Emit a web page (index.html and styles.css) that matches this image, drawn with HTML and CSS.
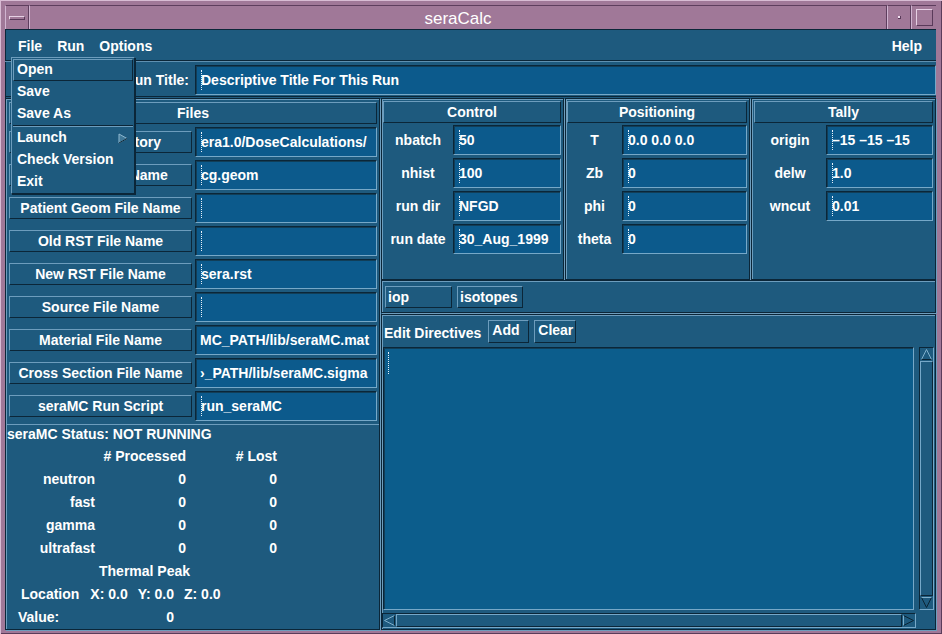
FILE: index.html
```html
<!DOCTYPE html>
<html>
<head>
<meta charset="utf-8">
<title>seraCalc</title>
<link rel="stylesheet" href="styles.css">
</head>
<body>
<div class="win">
  <div class="titlebar">
    <div class="tb-btn tb-menu"><span class="tb-bar"></span></div>
    <div class="tb-title">seraCalc</div>
    <div class="tb-btn tb-min"><span class="tb-dot"></span></div>
    <div class="tb-btn tb-max"><span class="tb-sq"></span></div>
  </div>
  <div class="client">
    <div class="menubar">
      <span class="mi mi-active">File</span><span class="mi">Run</span><span class="mi">Options</span><span class="mb-spacer"></span><span class="mi">Help</span>
    </div>
    <div class="runtitle">
      <div class="rt-label">Run Title:</div>
      <div class="field"><i class="caret"></i>Descriptive Title For This Run</div>
    </div>
    <div class="main">
      <div class="leftcol">
        <div class="files">
          <div class="phead">Files</div>
          <div class="frow"><div class="btn">Working Directory</div><div class="field"><i class="caret"></i>era1.0/DoseCalculations/</div></div>
          <div class="frow"><div class="btn">CG Geom File Name</div><div class="field"><i class="caret"></i>cg.geom</div></div>
          <div class="frow"><div class="btn">Patient Geom File Name</div><div class="field"><i class="caret"></i></div></div>
          <div class="frow"><div class="btn">Old RST File Name</div><div class="field"><i class="caret"></i></div></div>
          <div class="frow"><div class="btn">New RST File Name</div><div class="field"><i class="caret"></i>sera.rst</div></div>
          <div class="frow"><div class="btn">Source File Name</div><div class="field"><i class="caret"></i></div></div>
          <div class="frow"><div class="btn">Material File Name</div><div class="field">MC_PATH/lib/seraMC.mat</div></div>
          <div class="frow"><div class="btn">Cross Section File Name</div><div class="field">&#8250;_PATH/lib/seraMC.sigma</div></div>
          <div class="frow"><div class="btn">seraMC Run Script</div><div class="field"><i class="caret"></i>run_seraMC</div></div>
        </div>
        <div class="status">
          <div class="st-title">seraMC Status: NOT RUNNING</div>
          <div class="st-grid">
            <span></span><span class="c2 hd"># Processed</span><span class="c3 hd"># Lost</span>
            <span class="c1">neutron</span><span class="c2">0</span><span class="c3">0</span>
            <span class="c1">fast</span><span class="c2">0</span><span class="c3">0</span>
            <span class="c1">gamma</span><span class="c2">0</span><span class="c3">0</span>
            <span class="c1">ultrafast</span><span class="c2">0</span><span class="c3">0</span>
          </div>
          <div class="st-peak">Thermal Peak</div>
          <div class="st-loc"><span class="loc-l">Location</span><span class="loc-v">X: 0.0</span><span class="loc-v">Y: 0.0</span><span class="loc-v">Z: 0.0</span></div>
          <div class="st-val"><span class="val-l">Value:</span><span class="val-v">0</span></div>
        </div>
      </div>
      <div class="rightcol">
        <div class="panels">
          <div class="panel p-control">
            <div class="phead">Control</div>
            <div class="prow"><div class="plabel">nbatch</div><div class="field"><i class="caret"></i>50</div></div>
            <div class="prow"><div class="plabel">nhist</div><div class="field"><i class="caret"></i>100</div></div>
            <div class="prow"><div class="plabel">run dir</div><div class="field"><i class="caret"></i>NFGD</div></div>
            <div class="prow"><div class="plabel">run date</div><div class="field"><i class="caret"></i>30_Aug_1999</div></div>
          </div>
          <div class="panel p-pos">
            <div class="phead">Positioning</div>
            <div class="prow"><div class="plabel">T</div><div class="field"><i class="caret"></i>0.0 0.0 0.0</div></div>
            <div class="prow"><div class="plabel">Zb</div><div class="field"><i class="caret"></i>0</div></div>
            <div class="prow"><div class="plabel">phi</div><div class="field"><i class="caret"></i>0</div></div>
            <div class="prow"><div class="plabel">theta</div><div class="field"><i class="caret"></i>0</div></div>
          </div>
          <div class="panel p-tally">
            <div class="phead">Tally</div>
            <div class="prow"><div class="plabel">origin</div><div class="field"><i class="caret"></i>&#8211;15 &#8211;15 &#8211;15</div></div>
            <div class="prow"><div class="plabel">delw</div><div class="field"><i class="caret"></i>1.0</div></div>
            <div class="prow"><div class="plabel">wncut</div><div class="field"><i class="caret"></i>0.01</div></div>
          </div>
        </div>
        <div class="ioprow">
          <div class="tbtn iop">iop</div>
          <div class="tbtn isotopes">isotopes</div>
        </div>
        <div class="editpanel">
          <div class="edhead">
            <span class="edlabel">Edit Directives</span>
            <span class="pbtn add">Add</span>
            <span class="pbtn clear">Clear</span>
          </div>
          <div class="edbody">
            <div class="edtext"><i class="caret"></i></div>
            <div class="vscroll">
              <div class="arrow"><svg width="13" height="13" viewBox="0 0 13 13"><polygon points="6.5,1.5 1.5,11.5 11.5,11.5" fill="none" stroke="#7fb0cc" stroke-width="1"/><line x1="1.5" y1="11.5" x2="11.5" y2="11.5" stroke="#0a2434"/></svg></div>
              <div class="vslider"></div>
              <div class="arrow"><svg width="13" height="13" viewBox="0 0 13 13"><polygon points="1.5,1.5 11.5,1.5 6.5,11.5" fill="none" stroke="#0a2434" stroke-width="1"/><line x1="1.5" y1="1.5" x2="11.5" y2="1.5" stroke="#7fb0cc"/></svg></div>
            </div>
          </div>
          <div class="hscrollrow">
            <div class="hscroll">
              <div class="harrow"><svg width="13" height="13" viewBox="0 0 13 13"><polygon points="1.5,6.5 11.5,1.5 11.5,11.5" fill="none" stroke="#7fb0cc" stroke-width="1"/><line x1="11.5" y1="1.5" x2="11.5" y2="11.5" stroke="#0a2434"/></svg></div>
              <div class="hslider"></div>
              <div class="harrow"><svg width="13" height="13" viewBox="0 0 13 13"><polygon points="1.5,1.5 11.5,6.5 1.5,11.5" fill="none" stroke="#0a2434" stroke-width="1"/><line x1="1.5" y1="1.5" x2="1.5" y2="11.5" stroke="#7fb0cc"/></svg></div>
            </div>
          </div>
        </div>
      </div>
    </div>
  </div>

  <div class="dropdown">
    <div class="dd-item dd-active">Open</div>
    <div class="dd-item">Save</div>
    <div class="dd-item">Save As</div>
    <div class="dd-sep"></div>
    <div class="dd-item dd-casc">Launch<svg class="dd-arrow" width="10" height="11" viewBox="0 0 10 11"><polygon points="1,1 9,5.5 1,10" fill="#3f7898" stroke="#8fb8d0" stroke-width="1"/><line x1="1" y1="10" x2="9" y2="5.5" stroke="#0a2434"/></svg></div>
    <div class="dd-item">Check Version</div>
    <div class="dd-item">Exit</div>
  </div>
</div>
</body>
</html>
```

FILE: styles.css
```css
* { box-sizing: border-box; margin: 0; padding: 0; }
html, body { width: 942px; height: 634px; overflow: hidden; }
body {
  background: #a07898;
  font-family: "Liberation Sans", Arial, sans-serif;
  font-weight: bold;
  font-size: 14px;
  color: #ffffff;
}

.win {
  position: relative;
  width: 942px;
  height: 634px;
  display: flex;
  flex-direction: column;
  padding: 0 6px 6px 5px;
  background: #a07898;
  box-shadow: inset 1px 1px 0 #d8bcd4, inset -1px -1px 0 #5a3c5a;
}

/* title bar */
.titlebar {
  height: 30px;
  padding-top: 5px;
  display: flex;
}
.tb-btn {
  height: 24px;
  display: flex;
  align-items: center;
  justify-content: center;
  border-top: 1px solid #5e3e5e;
}
.tb-menu { width: 24px; border-left: 1px solid #d0b4d0; border-right: 1px solid #5e3e5e; }
.tb-bar {
  width: 16px; height: 4px;
  border-top: 1px solid #e6d0e4;
  border-left: 1px solid #e6d0e4;
  border-bottom: 1px solid #5a3a5a;
  border-right: 1px solid #5a3a5a;
}
.tb-title {
  flex: 1;
  height: 24px;
  border-top: 1px solid #5e3e5e;
  border-left: 1px solid #d0b4d0;
  border-right: 1px solid #5e3e5e;
  text-align: center;
  font-weight: normal;
  font-size: 17px;
  line-height: 25px;
  color: #ffffff;
}
.tb-min { width: 24px; border-left: 1px solid #d0b4d0; border-right: 1px solid #5e3e5e; }
.tb-dot { width: 3px; height: 3px; background: #f0e0f0; border-right: 1px solid #5a3a5a; border-bottom: 1px solid #5a3a5a; }
.tb-max { width: 25px; border-left: 1px solid #d0b4d0; }
.tb-sq {
  width: 17px; height: 17px;
  border-top: 1px solid #e6d0e4;
  border-left: 1px solid #e6d0e4;
  border-bottom: 1px solid #5a3a5a;
  border-right: 1px solid #5a3a5a;
}

/* client */
.client {
  flex: 1;
  display: flex;
  flex-direction: column;
  background: #1e5a7e;
  box-shadow: inset 1px 1px 0 #0b2638;
}

/* bevel helpers */
.btn, .phead, .tbtn, .pbtn, .mi-active, .dd-active {
  border: 1px solid;
  border-color: #6d9dbd #0b2638 #0b2638 #6d9dbd;
}
.field, .edtext {
  background: #0c5a8c;
  border: 1px solid;
  border-color: #0b2638 #76a8c8 #76a8c8 #0b2638;
  box-shadow: inset 1px 1px 0 #113e58;
}

/* menubar */
.menubar {
  height: 32px;
  display: flex;
  align-items: center;
  padding: 3px 5px 0 7px;
  border-bottom: 1px solid #0b2638;
  box-shadow: 0 1px 0 #5f90b0;
}
.mi {
  height: 22px;
  line-height: 20px;
  padding: 0 5px;
  margin-right: 3px;
  border: 1px solid transparent;
}
.mb-spacer { flex: 1; }

/* run title */
.runtitle {
  height: 36px;
  display: flex;
  align-items: center;
  padding-top: 3px;
  border-bottom: 1px solid #0b2638;
}
.rt-label {
  width: 185px;
  text-align: right;
  padding-right: 1px;
  margin-right: 5px;
}
.runtitle .field { flex: 1; height: 30px; }

.field {
  display: flex;
  align-items: center;
  padding-left: 4px;
  white-space: nowrap;
  overflow: hidden;
}
.caret {
  display: inline-block;
  width: 3px;
  height: 20px;
  margin-right: -2px;
  border-left: 1px dotted #e8f0f8;
  position: relative;
  left: 1px;
}

/* main */
.main {
  flex: 1;
  display: flex;
  padding-top: 1px;
}
.leftcol {
  width: 375px;
  display: flex;
  flex-direction: column;
  border: 1px solid #0b2638;
  box-shadow: inset 1px 1px 0 #6d9dbd, 1px 1px 0 #6d9dbd;
}
.files {
  height: 326px;
  padding: 3px 2px 0 3px;
  display: flex;
  flex-direction: column;
  border-bottom: 1px solid #6d9dbd;
}
.phead {
  height: 22px;
  line-height: 20px;
  text-align: center;
}
.files .phead { margin-bottom: 3px; }
.frow {
  height: 33px;
  display: flex;
  align-items: center;
  padding-bottom: 3px;
}
.frow .btn {
  width: 183px;
  height: 22px;
  line-height: 20px;
  text-align: center;
  white-space: nowrap;
  overflow: hidden;
  margin-right: 3px;
}
.frow .field { flex: 1; height: 30px; }

/* status */
.status {
  flex: 1;
  padding-left: 1px;
  line-height: 23px;
}
.st-title { height: 20px; line-height: 19px; }
.st-grid {
  display: grid;
  grid-template-columns: 88px 91px 91px;
  grid-auto-rows: 23px;
}
.st-grid .c1, .st-grid .c2, .st-grid .c3 { text-align: right; }
.st-peak { padding-left: 92px; height: 23px; }
.st-loc { padding-left: 14px; height: 23px; }
.loc-l { margin-right: 11px; }
.loc-v { margin-right: 10px; }
.st-val { padding-left: 11px; height: 23px; }
.val-v { margin-left: 107px; }

/* right */
.rightcol {
  flex: 1;
  display: flex;
  flex-direction: column;
  margin-left: 1px;
}
.panels {
  height: 182px;
  display: flex;
}
.panel {
  display: flex;
  flex-direction: column;
  padding: 2px 2px 0 1px;
  border: 1px solid #0b2638;
  box-shadow: inset 1px 1px 0 #6d9dbd, 1px 1px 0 #6d9dbd;
}
.p-control { width: 183px; }
.p-pos { width: 185px; margin-left: 1px; }
.p-tally { flex: 1; margin-left: 1px; padding-left: 2px; }
.panel .phead { margin-bottom: 2px; }
.prow {
  height: 33px;
  display: flex;
  padding-bottom: 3px;
}
.plabel {
  display: flex;
  align-items: center;
  justify-content: center;
  flex: 1;
}
.prow .field { height: 30px; }
.p-control .field { width: 108px; }
.p-pos .field { width: 125px; }
.p-tally .field { width: 107px; }

.ioprow {
  height: 33px;
  display: flex;
  align-items: center;
  padding-left: 3px;
  border: 1px solid #0b2638;
  box-shadow: inset 1px 1px 0 #6d9dbd, 1px 1px 0 #6d9dbd;
}
.tbtn {
  height: 22px;
  line-height: 20px;
  padding-left: 2px;
}
.iop { width: 67px; margin-right: 5px; }
.isotopes { width: 66px; }

.editpanel {
  flex: 1;
  display: flex;
  flex-direction: column;
  margin-top: 1px;
  border: 1px solid #0b2638;
  box-shadow: inset 1px 1px 0 #6d9dbd, 1px 1px 0 #6d9dbd;
}
.edhead {
  height: 32px;
  display: flex;
  align-items: center;
  padding-left: 2px;
}
.edlabel { margin-right: 7px; padding-top: 3px; }
.pbtn {
  height: 23px;
  line-height: 19px;
  padding: 0 0 0 3px;
  margin-top: 1px;
}
.add { width: 41px; margin-right: 5px; }
.clear { width: 42px; }
.edbody {
  flex: 1;
  display: flex;
  padding-left: 1px;
}
.edtext {
  flex: 1;
  background: #0c5d8c;
  padding: 4px 0 0 3px;
}
.edtext .caret { height: 22px; }
.vscroll {
  width: 15px;
  margin-left: 5px;
  margin-right: 1px;
  display: flex;
  flex-direction: column;
  border: 1px solid;
  border-color: #0b2638 #76a8c8 #76a8c8 #0b2638;
}
.arrow, .harrow { width: 13px; height: 13px; display: flex; flex: none; }
.vslider {
  flex: 1;
  border: 1px solid;
  border-color: #76a8c8 #0b2638 #0b2638 #76a8c8;
}
.hscrollrow {
  height: 19px;
  padding: 3px 19px 1px 0;
}
.hscroll {
  height: 15px;
  display: flex;
  border: 1px solid;
  border-color: #0b2638 #76a8c8 #76a8c8 #0b2638;
}
.hslider {
  flex: 1;
  border: 1px solid;
  border-color: #76a8c8 #0b2638 #0b2638 #76a8c8;
}

/* dropdown menu (overlay) */
.dropdown {
  position: absolute;
  left: 11px;
  top: 57px;
  width: 124px;
  height: 137px;
  padding: 1px 1px 0 1px;
  background: #1e5a7e;
  border: 1px solid;
  border-color: #6d9dbd #0b2638 #0b2638 #6d9dbd;
  box-shadow: 1px 1px 0 #0b2638;
}
.dd-item {
  height: 22px;
  line-height: 19px;
  padding-left: 3px;
  border: 1px solid transparent;
  position: relative;
}
.dd-active { border-color: #6d9dbd #0b2638 #0b2638 #6d9dbd; }
.dd-sep {
  height: 2px;
  border-top: 1px solid #0b2638;
  border-bottom: 1px solid #6d9dbd;
}
.dd-arrow { position: absolute; right: 4px; top: 5px; }
```
